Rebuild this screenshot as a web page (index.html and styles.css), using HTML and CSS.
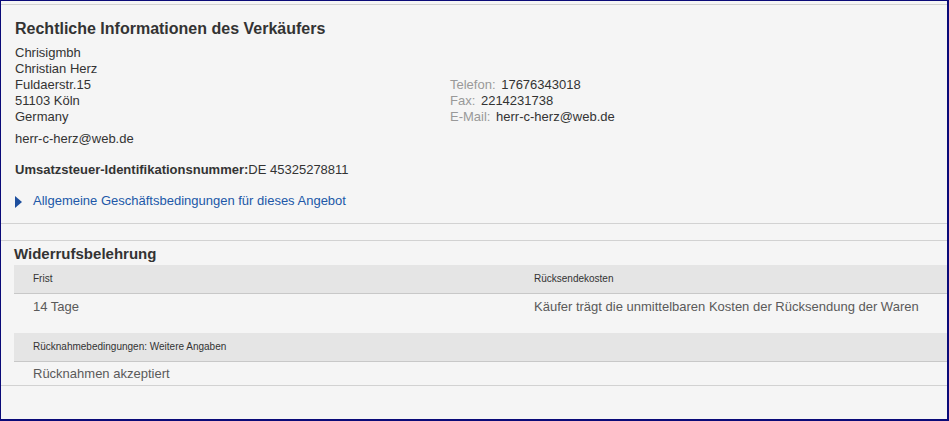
FILE: index.html
```html
<!DOCTYPE html>
<html lang="de">
<head>
<meta charset="utf-8">
<title>Rechtliche Informationen des Verkäufers</title>
<link rel="stylesheet" href="styles.css">
</head>
<body>
<div class="frame">
  <section class="legal">
    <h2 class="legal-title">Rechtliche Informationen des Verkäufers</h2>
    <div class="contact-grid">
      <div class="address">
        <div>Chrisigmbh</div>
        <div>Christian Herz</div>
        <div>Fuldaerstr.15</div>
        <div>51103 Köln</div>
        <div>Germany</div>
      </div>
      <div class="contact">
        <div><span class="label">Telefon:</span> <span class="value">17676343018</span></div>
        <div><span class="label">Fax:</span> <span class="value">2214231738</span></div>
        <div><span class="label">E-Mail:</span> <span class="value">herr-c-herz@web.de</span></div>
      </div>
    </div>
    <div class="email">herr-c-herz@web.de</div>
    <div class="vat"><b>Umsatzsteuer-Identifikationsnummer:</b>DE 45325278811</div>
    <a class="terms" href="#"><svg class="tri" width="8" height="12" viewBox="0 0 8 12"><path d="M0 0 L7 6 L0 12 Z" fill="#1e4f9e"/></svg><span>Allgemeine Geschäftsbedingungen für dieses Angebot</span></a>
  </section>
  <section class="returns">
    <h2 class="returns-title">Widerrufsbelehrung</h2>
    <div class="rtable">
      <div class="rhead">Frist</div>
      <div class="rhead">Rücksendekosten</div>
      <div class="rcell first">14 Tage</div>
      <div class="rcell first">Käufer trägt die unmittelbaren Kosten der Rücksendung der Waren</div>
      <div class="rhead wide">Rücknahmebedingungen: Weitere Angaben</div>
      <div class="rcell wide">Rücknahmen akzeptiert</div>
    </div>
  </section>
</div>
</body>
</html>
```

FILE: styles.css
```css
* { box-sizing: border-box; }
html, body { margin: 0; padding: 0; background: #f5f5f5; }
body {
  font-family: "Liberation Sans", Arial, sans-serif;
  font-size: 13px;
  color: #333;
}
.frame {
  width: 949px;
  height: 421px;
  border-style: solid;
  border-color: #0a0a78;
  border-width: 1px 2px 2px 1px;
  background: #f5f5f5;
  padding-top: 3px;
  overflow: hidden;
}
.legal {
  border-top: 1px solid #d2d2d2;
  border-bottom: 1px solid #d2d2d2;
  padding: 14px 14px 14px 14px;
}
.legal-title {
  margin: 0;
  font-size: 16px;
  line-height: 20px;
  font-weight: bold;
  color: #333;
}
.contact-grid {
  display: grid;
  grid-template-columns: 435px 1fr;
  margin-top: 6px;
  line-height: 16px;
}
.contact { align-self: end; }
.label { color: #999; }
.value { color: #333; margin-left: 2px; }
.email { margin-top: 6px; line-height: 16px; }
.vat { margin-top: 15px; line-height: 16px; }
.vat b { font-weight: bold; }
.terms {
  display: flex;
  align-items: center;
  margin-top: 15px;
  line-height: 16px;
  color: #2158a8;
  text-decoration: none;
}
.tri { margin-right: 10px; margin-top: 1px; }
.returns {
  margin-top: 16px;
  border-top: 1px solid #d2d2d2;
  border-bottom: 1px solid #d2d2d2;
  padding-left: 13px;
  padding-top: 4px;
}
.returns-title {
  margin: 0;
  font-size: 15px;
  line-height: 18px;
  font-weight: bold;
  color: #333;
}
.rtable {
  margin-top: 2px;
  display: grid;
  grid-template-columns: 501px 1fr;
}
.rhead {
  background: #e5e5e5;
  border-bottom: 1px solid #c8c8c8;
  height: 29px;
  padding-left: 19px;
  font-size: 10px;
  line-height: 28px;
  color: #333;
}
.rcell {
  padding: 5px 0 0 19px;
  font-size: 13px;
  line-height: 16px;
  color: #5a5a5a;
}
.rcell.first { height: 39px; }
.rcell.wide { height: 23px; padding-top: 4px; }
.wide { grid-column: 1 / 3; }
```
